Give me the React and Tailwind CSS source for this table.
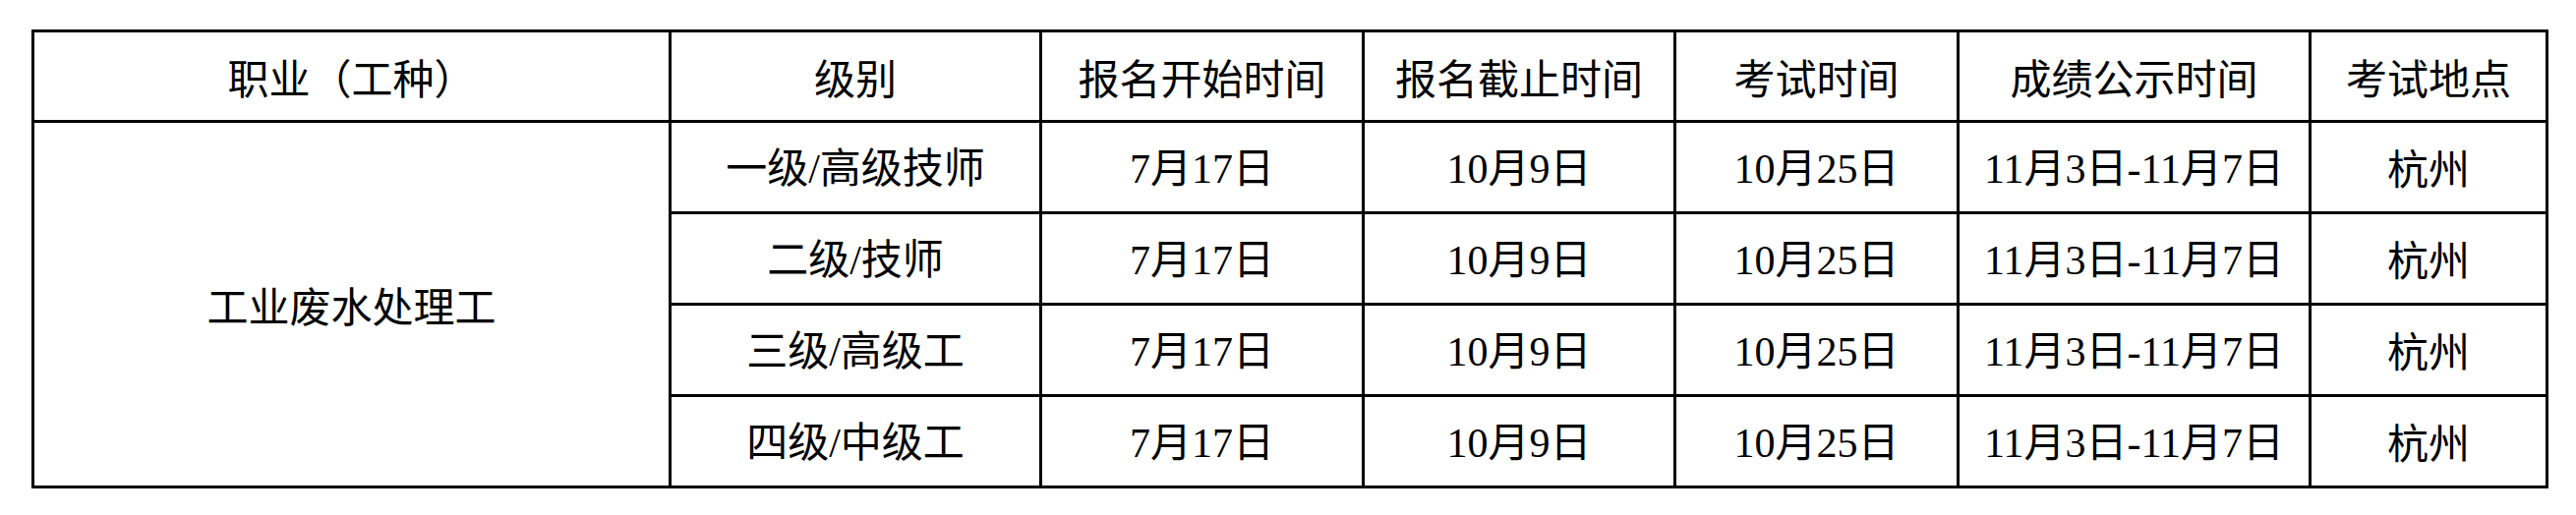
const rows = [
    '一级/高级技师',
    '二级/技师',
    '三级/高级工',
    '四级/中级工',
];

const headers = ['职业（工种）', '级别', '报名开始时间', '报名截止时间', '考试时间', '成绩公示时间', '考试地点'];

// latin runs (digits, slash, dash) get the Times-like face
const Mixed = ({ text }) =>
    text.split(/([0-9/\-]+)/).map((part, i) =>
        /^[0-9/\-]+$/.test(part) ? (
            <span key={i} style={{ fontFamily: '"Liberation Serif", "Times New Roman", "DejaVu Serif", serif' }}>
                {part}
            </span>
        ) : (
            <span key={i}>{part}</span>
        )
    );

const cell = 'border-[3px] border-black text-center align-middle';

const App = () => {
    return (
        <div className="w-[2620px] h-[524px] bg-white text-black pt-[30px] pl-[32px] font-['Noto_Sans_CJK_SC',sans-serif]">
            <table className="table-fixed border-collapse border-[3px] border-black text-[42px] leading-none">
                <colgroup>
                    <col className="w-[648px]" />
                    <col className="w-[377px]" />
                    <col className="w-[328px]" />
                    <col className="w-[317px]" />
                    <col className="w-[288px]" />
                    <col className="w-[358px]" />
                    <col className="w-[241px]" />
                </colgroup>
                <thead>
                    <tr className="h-[92px]">
                        {headers.map((h) => (
                            <th key={h} className={`${cell} font-normal`}>
                                {h}
                            </th>
                        ))}
                    </tr>
                </thead>
                <tbody>
                    {rows.map((level, i) => (
                        <tr key={level} className="h-[93px]">
                            {i === 0 && (
                                <td rowSpan={4} className={cell}>
                                    工业废水处理工
                                </td>
                            )}
                            <td className={cell}><Mixed text={level} /></td>
                            <td className={cell}><Mixed text="7月17日" /></td>
                            <td className={cell}><Mixed text="10月9日" /></td>
                            <td className={cell}><Mixed text="10月25日" /></td>
                            <td className={cell}><Mixed text="11月3日-11月7日" /></td>
                            <td className={cell}>杭州</td>
                        </tr>
                    ))}
                </tbody>
            </table>
        </div>
    );
};

export default App;
